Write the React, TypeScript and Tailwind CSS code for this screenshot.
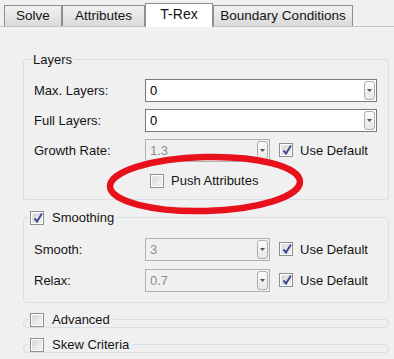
import React from 'react';

// Windows 7 style checkbox
function Check({ checked }: { checked?: boolean }) {
  return (
    <span className="relative inline-flex h-[14px] w-[14px] shrink-0 items-center justify-center border border-[#8e8f8f] bg-white">
      <span className="h-[10px] w-[10px] bg-gradient-to-br from-[#d6d6d6] to-[#f8f8f8] border border-[#e6e6e6]" />
      {checked && (
        <svg className="absolute left-[1px] top-[0px]" width="12" height="12" viewBox="0 0 12 12">
          <path d="M2.5 6.5 L5 9.5 L10 1.5" fill="none" stroke="#3f4e8c" strokeWidth="2" />
        </svg>
      )}
    </span>
  );
}

function Combo({ value, width, disabled }: { value: string; width: string; disabled?: boolean }) {
  return (
    <div
      className={`flex h-[23px] items-center border pl-[4px] pr-[1px] ${width} ${
        disabled ? 'border-[#adb2b5] bg-[#f0f0f0] text-[#8d8d8d]' : 'border-[#7a7a7a] bg-white text-black'
      }`}
    >
      <span className="flex-1 leading-none">{value}</span>
      <span className="flex h-[19px] w-[11px] items-center justify-center rounded-[3px] border border-[#acacac] bg-gradient-to-b from-[#fbfbfb] to-[#e8e8e8]">
        <svg width="5" height="3" viewBox="0 0 5 3">
          <path d="M0 0 H5 L2.5 3 Z" fill="#555" />
        </svg>
      </span>
    </div>
  );
}

const TABS = [
  { name: 'Solve', w: 'w-[58px]' },
  { name: 'Attributes', w: 'w-[83px]' },
  { name: 'T-Rex', w: 'w-[68px]', active: true },
  { name: 'Boundary Conditions', w: 'w-[140px]' },
];

export default function App() {
  return (
    <div className="relative h-[359px] w-[394px] overflow-hidden bg-[#f0f0f0] font-['Liberation_Sans',Arial,sans-serif] text-[13px] text-[#141414]">
      {/* Tabs */}
      <div className="flex h-[27px] items-end border-b border-[#c4c4c4] pl-[4px]">
        {TABS.map((t) =>
          t.active ? (
            <div
              key={t.name}
              className={`relative z-10 -mb-px flex h-[24px] items-center justify-center border border-b-0 border-[#8c8e94] bg-white pb-[2px] text-[14px] ${t.w}`}
            >
              {t.name}
            </div>
          ) : (
            <div
              key={t.name}
              className={`flex h-[21px] items-center justify-center border border-b-0 border-[#8c8e94] bg-gradient-to-b from-[#f2f2f2] to-[#dadada] text-[13.5px] ${t.w}`}
            >
              {t.name}
            </div>
          )
        )}
      </div>

      {/* Layers */}
      <fieldset className="ml-[23px] mt-[25px] w-[366px] rounded-[3px] border border-[#d5dfe5]">
        <legend className="ml-[7px] px-[2px] leading-[15px]">Layers</legend>
        <div className="pb-[11px] pl-[10px] pr-[11px] pt-[12px]">
          <div className="flex h-[23px] items-center">
            <span className="w-[111px]">Max. Layers:</span>
            <Combo value="0" width="w-[232px]" />
          </div>
          <div className="mt-[7px] flex h-[23px] items-center">
            <span className="w-[111px]">Full Layers:</span>
            <Combo value="0" width="w-[232px]" />
          </div>
          <div className="mt-[7px] flex h-[23px] items-center">
            <span className="w-[111px]">Growth Rate:</span>
            <Combo value="1.3" width="w-[125px]" disabled />
            <span className="ml-[9px]"><Check checked /></span>
            <span className="ml-[7px]">Use Default</span>
          </div>
          <div className="ml-[116px] mt-[11px] flex h-[15px] items-center gap-[7px]">
            <Check />
            <span>Push Attributes</span>
          </div>
        </div>
      </fieldset>

      {/* Smoothing */}
      <fieldset className="ml-[23px] mt-[10px] w-[366px] rounded-[3px] border border-[#d5dfe5]">
        <legend className="ml-[5px] flex items-center gap-[8px] px-[1px] leading-[15px]">
          <Check checked />
          <span className="pr-[2px]">Smoothing</span>
        </legend>
        <div className="pb-[10px] pl-[10px] pr-[11px] pt-[13px]">
          <div className="flex h-[23px] items-center">
            <span className="w-[111px]">Smooth:</span>
            <Combo value="3" width="w-[125px]" disabled />
            <span className="ml-[9px]"><Check checked /></span>
            <span className="ml-[7px]">Use Default</span>
          </div>
          <div className="mt-[8px] flex h-[23px] items-center">
            <span className="w-[111px]">Relax:</span>
            <Combo value="0.7" width="w-[125px]" disabled />
            <span className="ml-[9px]"><Check checked /></span>
            <span className="ml-[7px]">Use Default</span>
          </div>
        </div>
      </fieldset>

      {/* Collapsed groups */}
      <fieldset className="ml-[23px] mt-[9px] w-[366px] rounded-[4px] border border-[#d5dfe5]">
        <legend className="ml-[5px] flex items-center gap-[8px] px-[1px] leading-[15px]">
          <Check />
          <span className="pr-[2px]">Advanced</span>
        </legend>
      </fieldset>
      <fieldset className="ml-[23px] mt-[9px] w-[366px] rounded-[4px] border border-[#d5dfe5]">
        <legend className="ml-[5px] flex items-center gap-[8px] px-[1px] leading-[15px]">
          <Check />
          <span className="pr-[2px]">Skew Criteria</span>
        </legend>
      </fieldset>

      {/* Red annotation */}
      <svg className="pointer-events-none absolute left-0 top-0" width="394" height="359" viewBox="0 0 394 359">
        <ellipse cx="205" cy="184" rx="95" ry="27" fill="none" stroke="#e8101a" strokeWidth="6.5" transform="rotate(-1.5 205 184)" />
      </svg>
    </div>
  );
}
